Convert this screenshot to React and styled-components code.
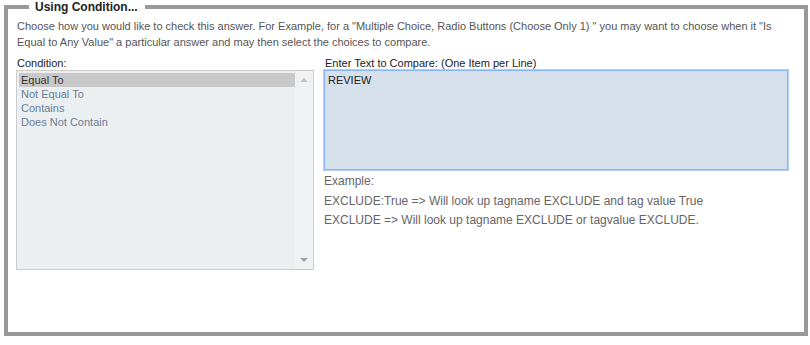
import React from 'react';
import styled, {createGlobalStyle} from 'styled-components';

const Global = createGlobalStyle`
  body {
    margin: 0;
    background: #fff;
    font-family: "Liberation Sans", Arial, sans-serif;
  }
`;

const Page = styled.div`
  padding: 0 2px 0 4px;
  width: 810px;
  box-sizing: border-box;
`;

const Fieldset = styled.fieldset`
  margin: 0;
  border: 4px solid #999;
  padding: 0 16px 62px 8px;
  min-width: 0;
`;

const Legend = styled.legend`
  margin-left: 13px;
  padding: 0 7px 0 6px;
  font-size: 12px;
  font-weight: bold;
  color: #222;
  line-height: 14px;
`;

const Intro = styled.p`
  margin: 4px 0 0 1px;
  font-size: 11px;
  line-height: 16px;
  color: #555;
`;

const Columns = styled.div`
  display: grid;
  grid-template-columns: 298px 1fr;
  column-gap: 10px;
  margin-top: 6px;
`;

const Column = styled.div`
  display: flex;
  flex-direction: column;
`;

const Label = styled.label`
  font-size: 11px;
  line-height: 14px;
  color: #222;
  margin-left: 1px;
  margin-bottom: ${p => p.$gap || 0}px;
`;

const ListBox = styled.div`
  display: flex;
  height: 200px;
  border: 1px solid #ccc;
  background: #eceff2;
  box-sizing: border-box;
`;

const Options = styled.ul`
  flex: 1;
  list-style: none;
  margin: 0;
  padding: 2px 0 0 2px;
`;

const Option = styled.li`
  font-size: 11px;
  line-height: 14px;
  padding-left: 2px;
  color: ${p => (p.$selected ? '#333' : '#6b7d94')};
  background: ${p => (p.$selected ? '#c8c8c8' : 'transparent')};
`;

const Scroll = styled.div`
  width: 18px;
  display: flex;
  flex-direction: column;
  justify-content: space-between;
  align-items: center;
  padding: 7px 0 7px;
  background: #f0f1f2;
`;

const Arrow = styled.span`
  width: 0;
  height: 0;
  border-left: 4px solid transparent;
  border-right: 4px solid transparent;
  ${p => (p.$down ? 'border-top: 4px solid #a3a3a3;' : 'border-bottom: 4px solid #c3c3c3;')}
`;

const TextArea = styled.textarea`
  display: block;
  width: 100%;
  height: 100px;
  box-sizing: border-box;
  margin: 0;
  padding: 3px 3px;
  border: 1px solid #8ab4f8;
  box-shadow: 0 0 0 1px #b3cff7;
  outline: none;
  resize: none;
  background: #d6e0ea;
  font-family: "Liberation Sans", Arial, sans-serif;
  font-size: 11px;
  line-height: 13px;
  color: #222;
`;

const Example = styled.div`
  margin-top: 2px;
  font-size: 12px;
  line-height: 19.5px;
  color: #666;
`;

const App = () => {
  const conditions = ['Equal To', 'Not Equal To', 'Contains', 'Does Not Contain'];
  return (
    <Page>
      <Global/>
      <Fieldset>
        <Legend>Using Condition...</Legend>
        <Intro>
          Choose how you would like to check this answer. For Example, for a "Multiple Choice, Radio Buttons (Choose Only 1) " you may want to choose when it "Is Equal to Any Value" a particular answer and may then select the choices to compare.
        </Intro>
        <Columns>
          <Column>
            <Label $gap={0}>Condition:</Label>
            <ListBox>
              <Options>
                {conditions.map((c, i) => (
                  <Option key={c} $selected={i === 0}>{c}</Option>
                ))}
              </Options>
              <Scroll>
                <Arrow/>
                <Arrow $down/>
              </Scroll>
            </ListBox>
          </Column>
          <Column>
            <Label>Enter Text to Compare: (One Item per Line)</Label>
            <TextArea defaultValue="REVIEW"/>
            <Example>
              <div>Example:</div>
              <div>EXCLUDE:True =&gt; Will look up tagname EXCLUDE and tag value True</div>
              <div>EXCLUDE =&gt; Will look up tagname EXCLUDE or tagvalue EXCLUDE.</div>
            </Example>
          </Column>
        </Columns>
      </Fieldset>
    </Page>
  );
};

export default App;
